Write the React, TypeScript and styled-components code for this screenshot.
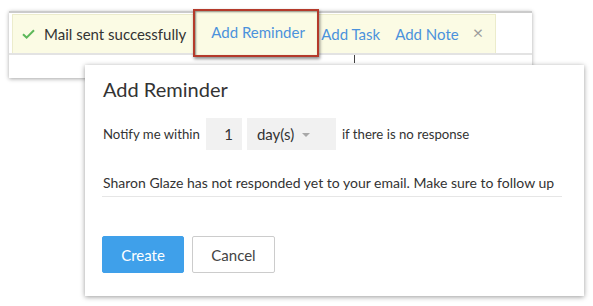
import * as React from 'react'
import styled, { createGlobalStyle } from 'styled-components'

const GlobalStyle = createGlobalStyle`
  html, body {
    margin: 0;
    padding: 0;
    background: #ffffff;
  }
  body {
    font-family: Lato, 'Open Sans', 'Liberation Sans', sans-serif;
    color: #333333;
    -webkit-font-smoothing: antialiased;
  }
`

const Page = styled.div`
  width: 593px;
  height: 306px;
  padding: 11px 0 0 9px;
  box-sizing: border-box;
  overflow: hidden;
`

const BackWindow = styled.div`
  width: 523px;
  height: 67px;
  box-sizing: border-box;
  background: #ffffff;
  border-top: 2px solid #cbcbcb;
  box-shadow: 0 1px 4px rgba(0, 0, 0, 0.35);
`

const Strip = styled.div`
  padding: 1px 0 0 3px;
  border-bottom: 2px solid #e3e3e3;
`

const NoticeBar = styled.div`
  width: 484px;
  height: 39px;
  box-sizing: border-box;
  display: flex;
  align-items: center;
  padding-left: 9px;
  background: #fbfbe4;
  border: 1px solid #ececcc;
  border-bottom: none;
  font-size: 15px;
`

const Message = styled.span`
  margin-left: 9px;
  color: #333333;
`

const Highlight = styled.div`
  align-self: stretch;
  margin: -6px 0 -4px 7px;
  width: 126px;
  box-sizing: border-box;
  display: flex;
  align-items: center;
  padding: 0 0 2px 16px;
  background: #fbfbe4;
  border: 2px solid #b43a2b;
  box-shadow: inset 1px 1px 2px rgba(0, 0, 0, 0.45), 1px 2px 3px rgba(0, 0, 0, 0.45);
`

const Action = styled.a<{ $gap?: number }>`
  margin-left: ${p => p.$gap ?? 0}px;
  color: #4b92dc;
  text-decoration: none;
  white-space: nowrap;
`

const Close = styled.span`
  margin-left: 14px;
  color: #9d9d9d;
  font-size: 18px;
  line-height: 1;
  margin-top: -4px;
`

const Cursor = styled.div`
  width: 1px;
  height: 8px;
  margin-left: 345px;
  background: #444444;
`

const Dialog = styled.div`
  position: relative;
  z-index: 1;
  width: 499px;
  height: 231px;
  box-sizing: border-box;
  margin: -13px 0 0 76px;
  padding: 12px 22px 0 17px;
  background: #ffffff;
  box-shadow: 0 1px 5px rgba(0, 0, 0, 0.4);
`

const Title = styled.h2`
  margin: 0 0 0 1px;
  font-size: 20px;
  line-height: 24px;
  font-weight: 400;
  color: #333333;
`

const Row = styled.div`
  display: flex;
  align-items: center;
  height: 32px;
  margin: 17px 0 0 1px;
  font-size: 13.2px;
  color: #333333;
`

const NumberBox = styled.div`
  width: 36px;
  height: 32px;
  box-sizing: border-box;
  margin: 0 5px 0 6px;
  padding: 0 9px 0 0;
  display: flex;
  align-items: center;
  justify-content: flex-end;
  background: #f1f1f1;
  font-size: 15px;
`

const SelectBox = styled.div`
  width: 89px;
  height: 32px;
  box-sizing: border-box;
  margin-right: 6px;
  padding-left: 10px;
  display: flex;
  align-items: center;
  gap: 8px;
  background: #f1f1f1;
  font-size: 15px;
`

const Caret = styled.span`
  width: 0;
  height: 0;
  border-left: 4px solid transparent;
  border-right: 4px solid transparent;
  border-top: 4px solid #a8a8a8;
  margin-top: 1px;
`

const Note = styled.div`
  margin-top: 23px;
  padding: 0 0 3px 1px;
  font-size: 14px;
  line-height: 20px;
  color: #333333;
  border-bottom: 1px solid #e6e6e6;
  white-space: nowrap;
`

const Actions = styled.div`
  display: flex;
  gap: 8px;
  margin-top: 39px;
`

const Button = styled.button<{ $primary?: boolean }>`
  width: ${p => (p.$primary ? 82 : 83)}px;
  height: 37px;
  border-radius: 2px;
  font-family: inherit;
  font-size: 15px;
  cursor: pointer;
  background: ${p => (p.$primary ? '#3fa0ea' : '#ffffff')};
  color: ${p => (p.$primary ? '#ffffff' : '#444444')};
  border: 1px solid ${p => (p.$primary ? '#3fa0ea' : '#cccccc')};
`

function CheckIcon() {
  return (
    <svg width="13" height="10" viewBox="0 0 13 10">
      <path d="M1 5.2 L4.6 8.6 L12 1.2" fill="none" stroke="#5db85a" strokeWidth="2" />
    </svg>
  )
}

export default function App() {
  return (
    <Page>
      <GlobalStyle />
      <BackWindow>
        <Strip>
          <NoticeBar>
            <CheckIcon />
            <Message>Mail sent successfully</Message>
            <Highlight>
              <Action>Add Reminder</Action>
            </Highlight>
            <Action $gap={2}>Add Task</Action>
            <Action $gap={15}>Add Note</Action>
            <Close>×</Close>
          </NoticeBar>
        </Strip>
        <Cursor />
      </BackWindow>
      <Dialog>
        <Title>Add Reminder</Title>
        <Row>
          <span>Notify me within</span>
          <NumberBox>1</NumberBox>
          <SelectBox>
            <span>day(s)</span>
            <Caret />
          </SelectBox>
          <span>if there is no response</span>
        </Row>
        <Note>Sharon Glaze has not responded yet to your email. Make sure to follow up</Note>
        <Actions>
          <Button $primary>Create</Button>
          <Button>Cancel</Button>
        </Actions>
      </Dialog>
    </Page>
  )
}
